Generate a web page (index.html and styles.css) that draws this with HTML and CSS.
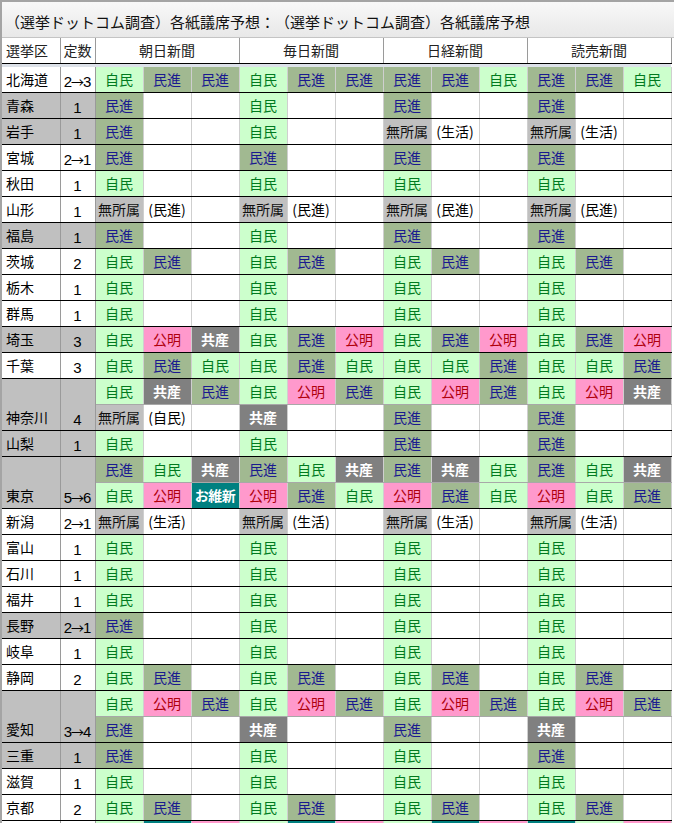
FILE: index.html
```html
<!DOCTYPE html>
<html lang="ja">
<head>
<meta charset="utf-8">
<title>各紙議席予想</title>
<link rel="stylesheet" href="styles.css">
</head>
<body>
<div class="frame">
  <div class="title">（選挙ドットコム調査）各紙議席予想：（選挙ドットコム調査）各紙議席予想</div>
  <table class="grid">
    <colgroup><col class="c1"><col class="c2"></colgroup>
    <colgroup><col class="p"><col class="p"><col class="p"></colgroup>
    <colgroup><col class="p"><col class="p"><col class="p"></colgroup>
    <colgroup><col class="p"><col class="p"><col class="p"></colgroup>
    <colgroup><col class="p"><col class="p"><col class="p"></colgroup>
    <thead>
      <tr><th class="hl">選挙区</th><th>定数</th><th colspan="3">朝日新聞</th><th colspan="3">毎日新聞</th><th colspan="3">日経新聞</th><th colspan="3">読売新聞</th></tr>
    </thead>
    <tbody>
      <tr class="gap"><td colspan="14"></td></tr>
      <tr><td class="nm">北海道</td><td class="nu">2<span class="ar">→</span>3</td><td class="j">自民</td><td class="m">民進</td><td class="m">民進</td><td class="j">自民</td><td class="m">民進</td><td class="m">民進</td><td class="m">民進</td><td class="m">民進</td><td class="j">自民</td><td class="m">民進</td><td class="m">民進</td><td class="j">自民</td></tr>
      <tr><td class="nm s">青森</td><td class="nu s">1</td><td class="m">民進</td><td></td><td></td><td class="j">自民</td><td></td><td></td><td class="m">民進</td><td></td><td></td><td class="m">民進</td><td></td><td></td></tr>
      <tr><td class="nm s">岩手</td><td class="nu s">1</td><td class="m">民進</td><td></td><td></td><td class="j">自民</td><td></td><td></td><td class="n">無所属</td><td>(生活)</td><td></td><td class="n">無所属</td><td>(生活)</td><td></td></tr>
      <tr><td class="nm">宮城</td><td class="nu">2<span class="ar">→</span>1</td><td class="m">民進</td><td></td><td></td><td class="m">民進</td><td></td><td></td><td class="m">民進</td><td></td><td></td><td class="m">民進</td><td></td><td></td></tr>
      <tr><td class="nm">秋田</td><td class="nu">1</td><td class="j">自民</td><td></td><td></td><td class="j">自民</td><td></td><td></td><td class="j">自民</td><td></td><td></td><td class="j">自民</td><td></td><td></td></tr>
      <tr><td class="nm">山形</td><td class="nu">1</td><td class="n">無所属</td><td>(民進)</td><td></td><td class="n">無所属</td><td>(民進)</td><td></td><td class="n">無所属</td><td>(民進)</td><td></td><td class="n">無所属</td><td>(民進)</td><td></td></tr>
      <tr><td class="nm s">福島</td><td class="nu s">1</td><td class="m">民進</td><td></td><td></td><td class="j">自民</td><td></td><td></td><td class="m">民進</td><td></td><td></td><td class="m">民進</td><td></td><td></td></tr>
      <tr><td class="nm">茨城</td><td class="nu">2</td><td class="j">自民</td><td class="m">民進</td><td></td><td class="j">自民</td><td class="m">民進</td><td></td><td class="j">自民</td><td class="m">民進</td><td></td><td class="j">自民</td><td class="m">民進</td><td></td></tr>
      <tr><td class="nm">栃木</td><td class="nu">1</td><td class="j">自民</td><td></td><td></td><td class="j">自民</td><td></td><td></td><td class="j">自民</td><td></td><td></td><td class="j">自民</td><td></td><td></td></tr>
      <tr><td class="nm">群馬</td><td class="nu">1</td><td class="j">自民</td><td></td><td></td><td class="j">自民</td><td></td><td></td><td class="j">自民</td><td></td><td></td><td class="j">自民</td><td></td><td></td></tr>
      <tr><td class="nm s">埼玉</td><td class="nu s">3</td><td class="j">自民</td><td class="k">公明</td><td class="c">共産</td><td class="j">自民</td><td class="m">民進</td><td class="k">公明</td><td class="j">自民</td><td class="m">民進</td><td class="k">公明</td><td class="j">自民</td><td class="m">民進</td><td class="k">公明</td></tr>
      <tr><td class="nm">千葉</td><td class="nu">3</td><td class="j">自民</td><td class="m">民進</td><td class="j">自民</td><td class="j">自民</td><td class="m">民進</td><td class="j">自民</td><td class="j">自民</td><td class="j">自民</td><td class="m">民進</td><td class="j">自民</td><td class="j">自民</td><td class="m">民進</td></tr>
      <tr class="top"><td class="nm s" rowspan="2">神奈川</td><td class="nu s" rowspan="2">4</td><td class="j">自民</td><td class="c">共産</td><td class="m">民進</td><td class="j">自民</td><td class="k">公明</td><td class="m">民進</td><td class="j">自民</td><td class="k">公明</td><td class="m">民進</td><td class="j">自民</td><td class="k">公明</td><td class="c">共産</td></tr>
      <tr class="sub"><td class="n">無所属</td><td>(自民)</td><td></td><td class="c">共産</td><td></td><td></td><td class="m">民進</td><td></td><td></td><td class="m">民進</td><td></td><td></td></tr>
      <tr><td class="nm s">山梨</td><td class="nu s">1</td><td class="j">自民</td><td></td><td></td><td class="j">自民</td><td></td><td></td><td class="m">民進</td><td></td><td></td><td class="m">民進</td><td></td><td></td></tr>
      <tr class="top"><td class="nm s" rowspan="2">東京</td><td class="nu s" rowspan="2">5<span class="ar">→</span>6</td><td class="m">民進</td><td class="j">自民</td><td class="c">共産</td><td class="m">民進</td><td class="j">自民</td><td class="c">共産</td><td class="m">民進</td><td class="c">共産</td><td class="j">自民</td><td class="m">民進</td><td class="j">自民</td><td class="c">共産</td></tr>
      <tr class="sub"><td class="j">自民</td><td class="k">公明</td><td class="i">お維新</td><td class="k">公明</td><td class="m">民進</td><td class="j">自民</td><td class="k">公明</td><td class="m">民進</td><td class="j">自民</td><td class="k">公明</td><td class="j">自民</td><td class="m">民進</td></tr>
      <tr><td class="nm">新潟</td><td class="nu">2<span class="ar">→</span>1</td><td class="n">無所属</td><td>(生活)</td><td></td><td class="n">無所属</td><td>(生活)</td><td></td><td class="n">無所属</td><td>(生活)</td><td></td><td class="n">無所属</td><td>(生活)</td><td></td></tr>
      <tr><td class="nm">富山</td><td class="nu">1</td><td class="j">自民</td><td></td><td></td><td class="j">自民</td><td></td><td></td><td class="j">自民</td><td></td><td></td><td class="j">自民</td><td></td><td></td></tr>
      <tr><td class="nm">石川</td><td class="nu">1</td><td class="j">自民</td><td></td><td></td><td class="j">自民</td><td></td><td></td><td class="j">自民</td><td></td><td></td><td class="j">自民</td><td></td><td></td></tr>
      <tr><td class="nm">福井</td><td class="nu">1</td><td class="j">自民</td><td></td><td></td><td class="j">自民</td><td></td><td></td><td class="j">自民</td><td></td><td></td><td class="j">自民</td><td></td><td></td></tr>
      <tr><td class="nm s">長野</td><td class="nu s">2<span class="ar">→</span>1</td><td class="m">民進</td><td></td><td></td><td class="j">自民</td><td></td><td></td><td class="j">自民</td><td></td><td></td><td class="j">自民</td><td></td><td></td></tr>
      <tr><td class="nm">岐阜</td><td class="nu">1</td><td class="j">自民</td><td></td><td></td><td class="j">自民</td><td></td><td></td><td class="j">自民</td><td></td><td></td><td class="j">自民</td><td></td><td></td></tr>
      <tr><td class="nm">静岡</td><td class="nu">2</td><td class="j">自民</td><td class="m">民進</td><td></td><td class="j">自民</td><td class="m">民進</td><td></td><td class="j">自民</td><td class="m">民進</td><td></td><td class="j">自民</td><td class="m">民進</td><td></td></tr>
      <tr class="top"><td class="nm s" rowspan="2">愛知</td><td class="nu s" rowspan="2">3<span class="ar">→</span>4</td><td class="j">自民</td><td class="k">公明</td><td class="m">民進</td><td class="j">自民</td><td class="k">公明</td><td class="m">民進</td><td class="j">自民</td><td class="k">公明</td><td class="m">民進</td><td class="j">自民</td><td class="k">公明</td><td class="m">民進</td></tr>
      <tr class="sub"><td class="m">民進</td><td></td><td></td><td class="c">共産</td><td></td><td></td><td class="m">民進</td><td></td><td></td><td class="c">共産</td><td></td><td></td></tr>
      <tr><td class="nm s">三重</td><td class="nu s">1</td><td class="m">民進</td><td></td><td></td><td class="j">自民</td><td></td><td></td><td class="j">自民</td><td></td><td></td><td class="m">民進</td><td></td><td></td></tr>
      <tr><td class="nm">滋賀</td><td class="nu">1</td><td class="j">自民</td><td></td><td></td><td class="j">自民</td><td></td><td></td><td class="j">自民</td><td></td><td></td><td class="j">自民</td><td></td><td></td></tr>
      <tr><td class="nm">京都</td><td class="nu">2</td><td class="j">自民</td><td class="m">民進</td><td></td><td class="j">自民</td><td class="m">民進</td><td></td><td class="j">自民</td><td class="m">民進</td><td></td><td class="j">自民</td><td class="m">民進</td><td></td></tr>
      <tr class="edge"><td class="nm"></td><td class="nu"></td><td class="j"></td><td class="i"></td><td class="k"></td><td class="j"></td><td class="i"></td><td class="k"></td><td class="j"></td><td class="i"></td><td class="k"></td><td class="i"></td><td class="j"></td><td class="k"></td></tr>
    </tbody>
  </table>
</div>
</body>
</html>
```
FILE: styles.css
```css
html, body {
  margin: 0;
  padding: 0;
  background: #ffffff;
}
body {
  font-family: "Noto Sans CJK JP", sans-serif;
  color: #000;
  overflow: hidden;
}
.frame {
  border-top: 2px solid #a4a4a4;
  border-left: 2px solid #a4a4a4;
  width: 672px;
  overflow: hidden;
}
.title {
  height: 31px;
  padding: 4px 0 0 3px;
  line-height: 31px;
  font-size: 15px;
  white-space: nowrap;
  text-spacing-trim: space-all;
  color: #111;
  background: linear-gradient(#f8f8f8, #e8e8e8);
  border-bottom: 1px solid #c4c4c4;
}
.grid {
  border-collapse: collapse;
  table-layout: fixed;
  width: 669px;
  font-size: 14px;
}
col.c1 { width: 58px; }
col.c2 { width: 35px; }
col.p { width: 48px; }

.grid th {
  font-weight: normal;
  color: #222;
  padding: 0;
  line-height: 25px;
  text-align: center;
  border-left: 1px solid #9a9a9a;
  border-right: 1px solid #9a9a9a;
  border-bottom: 1px solid #000;
  white-space: nowrap;
}
.grid th.hl {
  text-align: left;
  padding-left: 4px;
  border-left: none;
}
.grid td {
  padding: 0;
  line-height: 25px;
  text-align: center;
  white-space: nowrap;
  overflow: hidden;
  border-left: 1px solid #cfcfcf;
  border-right: 1px solid #cfcfcf;
  border-bottom: 1px solid #000;
}
tr:not(.sub) > td:nth-child(3n) { border-left-color: #9a9a9a; }
tr.sub > td:nth-child(3n+1) { border-left-color: #9a9a9a; }
tr.top > td:not(.nm):not(.nu) { border-bottom-color: #a8a8a8; }

.grid tr.gap td {
  height: 3px;
  line-height: 0;
  font-size: 0;
  background: #dde2e9;
  border-left: none;
  border-right: none;
  border-bottom: none;
}
.grid tr.edge td {
  height: 25px;
}
.grid td.nm {
  text-align: left;
  padding-left: 4px;
  vertical-align: bottom;
  border-left: none;
  border-right-color: #9a9a9a;
}
.grid td.nu {
  font-family: "Liberation Sans", sans-serif;
  font-size: 15px;
  vertical-align: bottom;
  padding-top: 5px;
  line-height: 20px;
  border-right-color: #9a9a9a;
  border-left-color: #9a9a9a;
}
.ar {
  font-family: "Noto Sans CJK JP", sans-serif;
  font-size: 13px;
  letter-spacing: -1px;
  margin-left: -1px;
}
.grid td.s { background: #c0c0c0; }

.grid td.j { background: #ccffcc; color: #007a1f; }
.grid td.m { background: #a1b991; color: #1a1a8f; }
.grid td.k { background: #ff99cc; color: #b0000c; }
.grid td.c { background: #808080; color: #ffffff; font-weight: bold; }
.grid td.i { background: #008080; color: #ffffff; font-weight: bold; letter-spacing: -0.5px; }
.grid td.n { background: #c0c0c0; color: #111; }
```
